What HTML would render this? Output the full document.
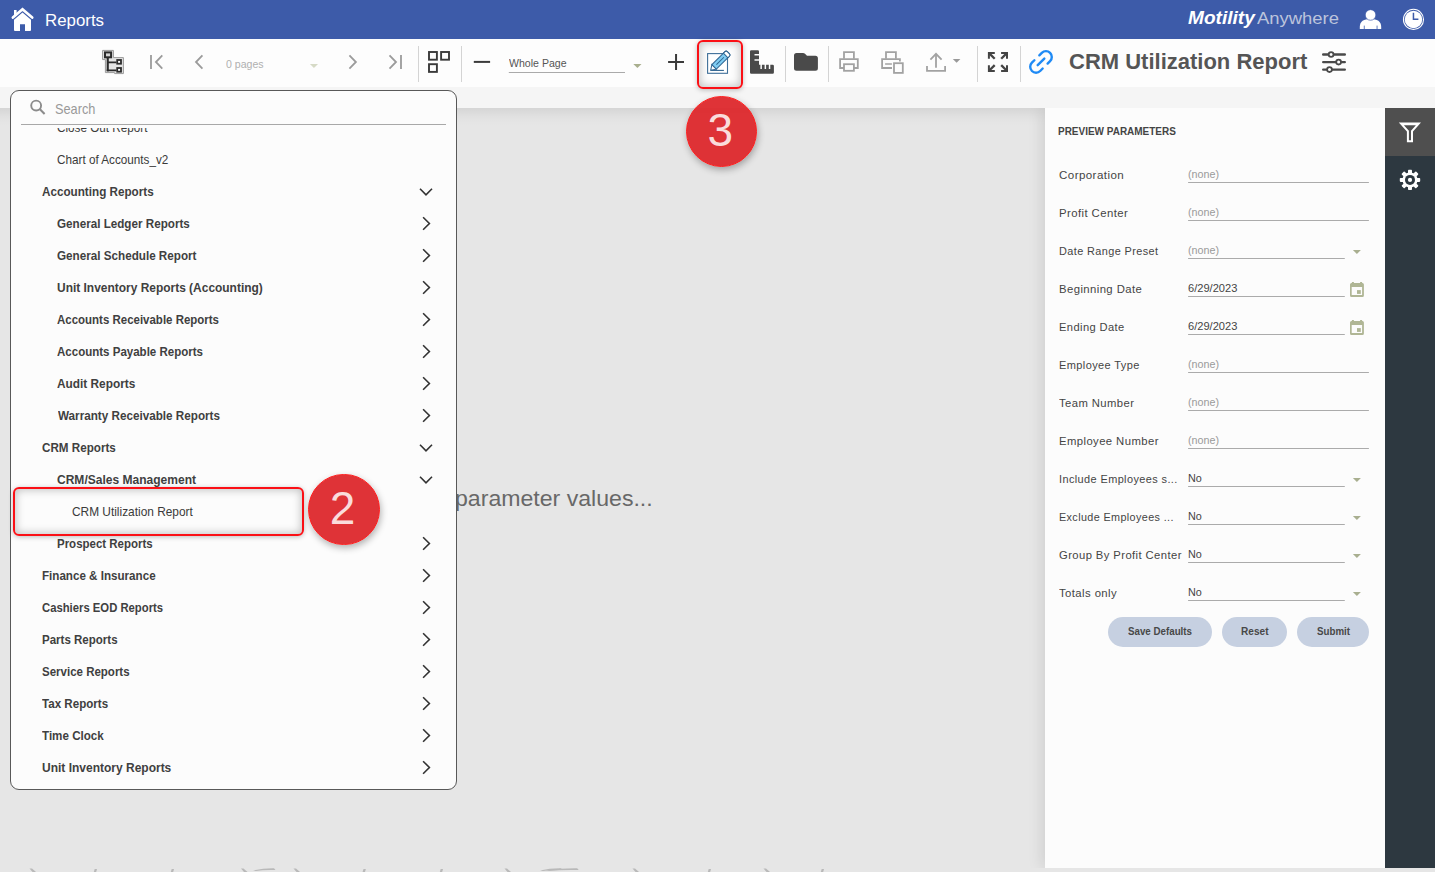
<!DOCTYPE html>
<html><head><meta charset="utf-8"><title>Reports</title>
<style>
*{box-sizing:border-box;margin:0;padding:0}
html,body{width:1435px;height:872px;overflow:hidden;background:#e6e6e6;font-family:"Liberation Sans",sans-serif;}
body{position:relative}
.abs{position:absolute}
#hdr{left:0;top:0;width:1435px;height:39px;background:#3d5ba9}
#tb{left:0;top:39px;width:1435px;height:48px;background:#fdfdfd}
#strip{left:0;top:87px;width:1435px;height:21px;background:#f5f5f5}
#main{left:0;top:108px;width:1435px;height:760px;background:#e6e6e6;overflow:hidden}
#mainsh{left:0;top:0;width:1045px;height:18px;background:linear-gradient(to bottom,rgba(0,0,0,0.075),rgba(0,0,0,0.05) 22%,rgba(0,0,0,0.025) 48%,rgba(0,0,0,0.008) 75%,rgba(0,0,0,0))}
#tree{left:10px;top:90px;width:447px;height:700px;background:#fcfcfc;border:1px solid #585858;border-radius:9px;overflow:hidden}
#rp{left:1045px;top:0;width:340px;height:760px;background:#fcfcfc;box-shadow:-3px 0 14px rgba(0,0,0,0.10)}
#sb{left:1385px;top:108px;width:50px;height:760px;background:#2d3840}
#sbtab{left:1385px;top:108px;width:50px;height:48px;background:#4f4f4f}
.ti{position:absolute;height:32px;line-height:32px;font-size:13px;color:#3a3a3a;white-space:nowrap}
.ti.b{font-weight:bold;color:#404040}
.tx{display:inline-block;transform-origin:0 50%;white-space:nowrap}
.chv{position:absolute}
.t{position:absolute;white-space:nowrap}
.lab{font-size:11px;line-height:16px;color:#444;letter-spacing:0.4px}
.val{font-size:11px;line-height:16px}
.btn{height:29.6px;border-radius:15px;background:#c6d0e1}
.btx{font-size:10px;line-height:14px;font-weight:bold;color:#484848}
.rbox{border:2px solid #fb1016;box-shadow:inset 0 0 8px 1px rgba(0,0,0,0.24),0 1px 5px rgba(0,0,0,0.25)}
.rcirc{width:71.6px;height:71.6px;border-radius:50%;background:rgba(221,40,44,0.95);border:1.6px solid #ff2020;box-shadow:1px 3px 7px rgba(0,0,0,0.3);color:#fadcdc;font-size:46px;line-height:66px;text-align:center;text-indent:-2.6px}
</style></head><body>
<div class="abs" id="hdr"></div>
<div class="abs" id="tb"></div>
<div class="abs" id="strip"></div>
<div class="abs" id="main"><div class="abs" id="mainsh"></div><div class="abs" id="rp"></div></div>
<div class="abs" id="sb"></div>
<div class="abs" id="sbtab"></div>
<svg class="abs" style="left:0;top:0" width="120" height="39" viewBox="0 0 120 39">
<path d="M12.9 17.6 L22.5 9.2 L32.2 17.6" fill="none" stroke="#fff" stroke-width="2.7" stroke-linecap="round" stroke-linejoin="miter"/>
<path d="M14 19.8 L22.5 12.4 L31 19.8 L31 30 Q31 31 30 31 L25 31 L25 24.3 L20 24.3 L20 31 L15 31 Q14 31 14 30 Z" fill="#fff"/>
<rect x="14" y="10" width="2.6" height="5.5" fill="#fff"/>
</svg>
<div class="t" style="left:44.6px;top:10px;font-size:16.2px;line-height:20px;color:#fff"><span style="display:inline-block;transform-origin:0 50%;transform:scaleX(1.0408)">Reports</span></div>
<div class="t" style="left:1188px;top:5.9px;font-size:18.5px;line-height:24px;color:#fff;font-weight:bold;font-style:italic"><span style="display:inline-block;transform-origin:0 50%;transform:scaleX(1.0317)">Motility</span></div>
<div class="t" style="left:1257px;top:7.4px;font-size:17px;line-height:24px;color:#bcc4dc"><span style="display:inline-block;transform-origin:0 50%;transform:scaleX(1.0845)">Anywhere</span></div>
<svg class="abs" style="left:1355px;top:5px" width="32" height="30" viewBox="0 0 32 30">
<path d="M4.8 24 L4.8 21.8 C4.8 16.4 8.8 14 15.5 14 C22.2 14 26.2 16.4 26.2 21.8 L26.2 24 Z" fill="#fff"/>
<circle cx="15.55" cy="9.95" r="5.3" fill="#fff" stroke="#3d5ba9" stroke-width="0.7"/>
<rect x="8.8" y="20.6" width="0.9" height="3.4" fill="#5571b6"/><rect x="21.6" y="20.6" width="0.9" height="3.4" fill="#5571b6"/>
</svg>
<svg class="abs" style="left:1400px;top:6px" width="28" height="28" viewBox="0 0 28 28">
<circle cx="13.5" cy="13.4" r="10.05" fill="none" stroke="#fff" stroke-width="1.05"/>
<circle cx="13.5" cy="13.4" r="8.75" fill="#fff"/>
<path d="M13.45 6.7 V13.35 H18.4" fill="none" stroke="#3d5ba9" stroke-width="1.5"/>
</svg>
<!-- toolbar icons -->
<svg class="abs" style="left:0;top:39px" width="1435" height="48" viewBox="0 39 1435 48">
<!-- tree icon -->
<g>
<path d="M102.6 50.4 H113.4 V57.6 H123.4 V73.6 H114.6 V72.6 H105.4 V59.6 H102.6 Z" fill="#e4e4e4" stroke="#9a9a9a" stroke-width="1"/>
<rect x="105" y="52.4" width="6.1" height="4.9" fill="#d4d4d4" stroke="#2b2b2b" stroke-width="2"/>
<path d="M107.75 58 V71.3" fill="none" stroke="#2b2b2b" stroke-width="2.1"/>
<path d="M106.7 70.45 H116.4 M107.7 62.45 H116.4" fill="none" stroke="#2b2b2b" stroke-width="1.7"/>
<rect x="117.2" y="60" width="3.8" height="3.7" fill="#fff" stroke="#2b2b2b" stroke-width="1.8"/>
<rect x="117.2" y="68" width="3.8" height="3.7" fill="#fff" stroke="#2b2b2b" stroke-width="1.8"/>
</g>
<!-- first / prev / next / last -->
<g fill="none" stroke="#9b9b9b" stroke-width="1.8">
<path d="M151 55 V69"/><path d="M162.3 55.4 L155.9 62 L162.3 68.6"/>
<path d="M202.4 55.4 L196 62 L202.4 68.6"/>
<path d="M349.4 55.4 L355.9 62 L349.4 68.6"/>
<path d="M389.5 55.4 L396 62 L389.5 68.6"/><path d="M401 55 V69"/>
</g>
<!-- dropdown arrows -->
<path d="M309.9 63.9 H318 L313.95 68 Z" fill="#d6dac6"/>
<path d="M633.3 63.9 H641.5 L637.4 68.1 Z" fill="#a9af8e"/>
<!-- separators -->
<g stroke="#d4d4d4" stroke-width="1">
<path d="M418.5 46 V82"/><path d="M461.5 46 V82"/><path d="M785.5 46 V82"/><path d="M828.5 46 V82"/><path d="M977.5 46 V82"/><path d="M1020.5 46 V82"/>
</g>
<!-- grid -->
<g fill="none" stroke="#3a3a3a" stroke-width="1.9">
<rect x="429" y="52" width="7.9" height="7.7"/><rect x="441.1" y="52" width="7.9" height="7.7"/><rect x="429" y="64.2" width="7.9" height="7.7"/>
</g>
<!-- minus / plus -->
<path d="M473.8 61.9 H490.1" stroke="#3a3a3a" stroke-width="2"/>
<path d="M668.1 62 H684 M676.05 54.1 V69.9" stroke="#3a3a3a" stroke-width="2" fill="none"/>
<!-- zoom underline -->
<path d="M508.8 72.5 H625" stroke="#aaa" stroke-width="1"/>
</svg>
<div class="t" style="left:226.1px;top:56px;font-size:11px;line-height:16px;color:#b0b0b0"><span style="display:inline-block;transform-origin:0 50%;transform:scaleX(0.9603)">0 pages</span></div>
<div class="t" style="left:509.4px;top:54.9px;font-size:11px;line-height:16px;color:#555"><span style="display:inline-block;transform-origin:0 50%;transform:scaleX(0.9610)">Whole Page</span></div>
<svg class="abs" style="left:690px;top:39px" width="745" height="48" viewBox="690 39 745 48">
<!-- edit icon -->
<g>
<rect x="707.6" y="53.6" width="19.9" height="19.7" fill="#fff" stroke="#3f6f99" stroke-width="1.1"/>
<path d="M710.6 70.4 H723.9" stroke="#2f6490" stroke-width="1.1"/>
<g transform="translate(710.7 70.2) rotate(-44.5)">
<path d="M0 0 L4.8 -3.2 L4.8 3.2 Z" fill="#fff" stroke="#2f6490" stroke-width="1"/>
<path d="M4.8 -3.2 H23.2 Q24.8 -3.2 24.8 -1.6 V1.6 Q24.8 3.2 23.2 3.2 H4.8 Z" fill="#7fccf2" stroke="#2f6490" stroke-width="1"/>
<path d="M21 -3.2 H23.2 Q24.8 -3.2 24.8 -1.6 V1.6 Q24.8 3.2 23.2 3.2 H21 Z" fill="#fff" stroke="#2f6490" stroke-width="1"/>
<path d="M8 0 H18.5" stroke="#2f6490" stroke-width="1"/>
</g>
</g>
<!-- ruler -->
<path d="M751.2 50.2 H757.8 Q759 50.2 759 51.4 V54 H754.5 V55.5 H759 V59.3 H754.5 V60.8 H759 V64.8 H760.4 V69 H761.9 V64.8 H764.6 V69 H766.1 V64.8 H768.8 V69 H770.3 V64.8 H772.7 Q773.9 64.8 773.9 66 V72.6 Q773.9 73.8 772.7 73.8 H751.2 Q750 73.8 750 72.6 V51.4 Q750 50.2 751.2 50.2 Z" fill="#4a4a4a"/>
<!-- folder -->
<path d="M796.5 52.9 H803 Q804.2 52.9 805 53.7 L807 55.8 H815.4 Q817.9 55.8 817.9 58.3 V68.3 Q817.9 70.8 815.4 70.8 H796.5 Q794 70.8 794 68.3 V55.4 Q794 52.9 796.5 52.9 Z" fill="#4a4a4a"/>
<!-- printer -->
<g fill="none" stroke="#a2a2a2" stroke-width="1.8">
<path d="M844 58.8 V52.1 H853.9 V58.8"/>
<path d="M844 68 H840.1 V59.2 H857.8 V68 H853.9"/>
<rect x="844" y="64.2" width="9.9" height="6.6"/>
</g>
<!-- print page -->
<g fill="none" stroke="#a2a2a2" stroke-width="1.8">
<path d="M886 58.8 V52.1 H895.9 V58.8"/>
<path d="M892 68 H882.1 V59.2 H899.9 V61.4"/>
<path d="M885.1 64 H891.9" stroke-width="1.5"/>
<rect x="894" y="63.2" width="8.8" height="9.7"/>
</g>
<!-- export -->
<g fill="none" stroke="#a2a2a2" stroke-width="1.8">
<path d="M936 67.8 V54.3"/><path d="M930.4 59.6 L936 53.9 L941.6 59.6"/>
<path d="M927 66.1 V70.8 H945.1 V66.1"/>
</g>
<path d="M952.8 59 H960.4 L956.6 62.8 Z" fill="#999"/>
<!-- fullscreen -->
<g fill="none" stroke="#444" stroke-width="2">
<path d="M988.9 58.7 V53 H994.8"/><path d="M989.3 53.4 L994.7 58.8" stroke-width="2.3"/>
<path d="M1007 58.7 V53 H1001.1"/><path d="M1006.6 53.4 L1001.2 58.8" stroke-width="2.3"/>
<path d="M988.9 65.2 V70.9 H994.8"/><path d="M989.3 70.5 L994.7 65.1" stroke-width="2.3"/>
<path d="M1007 65.2 V70.9 H1001.1"/><path d="M1006.6 70.5 L1001.2 65.1" stroke-width="2.3"/>
</g>
<!-- link -->
<g fill="none" stroke="#1f8af5" stroke-width="2.4" stroke-linecap="round" transform="translate(1041 61.9) rotate(-45)">
<path d="M-3.5 -5.85 H-7 A5.85 5.85 0 0 0 -7 5.85 H-3.5"/>
<path d="M3.5 -5.85 H7 A5.85 5.85 0 0 1 7 5.85 H3.5"/>
<path d="M-4.7 0 H4.7"/>
</g>
<!-- sliders -->
<g fill="none" stroke="#4a4a4a" stroke-width="2.4" stroke-linecap="round">
<path d="M1323.2 54.5 H1344.8"/><path d="M1323.2 62.1 H1344.8"/><path d="M1323.2 69.6 H1344.8"/>
</g>
<g fill="#fff" stroke="#4a4a4a" stroke-width="1.8">
<circle cx="1331.1" cy="54.5" r="2.4"/><circle cx="1338.6" cy="62.1" r="2.4"/><circle cx="1329.5" cy="69.6" r="2.4"/>
</g>
</svg>
<div class="t" style="left:1068.6px;top:48px;font-size:21.2px;line-height:28px;color:#555;font-weight:bold"><span style="display:inline-block;transform-origin:0 50%;transform:scaleX(1.0383)">CRM Utilization Report</span></div>
<div class="t" style="left:454.8px;top:485.4px;font-size:22px;line-height:28px;color:#686868"><span style="display:inline-block;transform-origin:0 50%;transform:scaleX(1.0499)">parameter values...</span></div>
<div class="t" style="right:986px;top:485.4px;font-size:22px;line-height:28px;color:#686868">Waiting for</div>
<div class="abs" id="tree">
<svg class="abs" style="left:0;top:0" width="445" height="40" viewBox="11 91 445 40">
<circle cx="36.15" cy="105.55" r="4.95" fill="none" stroke="#8c8c8c" stroke-width="1.9"/>
<path d="M39.7 109.1 L44.6 114" stroke="#8c8c8c" stroke-width="2.1" stroke-linecap="butt"/>
<path d="M21 124.5 H446" stroke="#a8a8a8" stroke-width="1"/>
</svg>
<div class="t" style="left:44.4px;top:9.2px;font-size:14.2px;line-height:18px;color:#999"><span style="display:inline-block;transform-origin:0 50%;transform:scaleX(0.8987)">Search</span></div>
<div class="abs" style="left:0;top:36.9px;width:445px;height:20px;overflow:hidden"><div class="ti" style="left:46px;top:-15.6px"><span class="tx" style="display:inline-block;transform-origin:0 50%;transform:scaleX(0.9001)">Close Out Report</span></div></div>
<div class="ti" style="left:46.0px;top:52.5px"><span class="tx" style="display:inline-block;transform-origin:0 50%;transform:scaleX(0.9006)">Chart of Accounts_v2</span></div>
<div class="ti b" style="left:31.2px;top:84.5px"><span class="tx" style="display:inline-block;transform-origin:0 50%;transform:scaleX(0.8991)">Accounting Reports</span></div>
<svg class="chv" style="left:407px;top:92.5px" width="16" height="16" viewBox="0 0 16 16"><path d="M2 4.7 L8 10.8 L14 4.7" fill="none" stroke="#333" stroke-width="1.6"/></svg>
<div class="ti b" style="left:46.0px;top:116.5px"><span class="tx" style="display:inline-block;transform-origin:0 50%;transform:scaleX(0.8966)">General Ledger Reports</span></div>
<svg class="chv" style="left:407px;top:124.5px" width="16" height="16" viewBox="0 0 16 16"><path d="M5.1 1.2 L11.4 7.5 L5.1 13.8" fill="none" stroke="#333" stroke-width="1.6"/></svg>
<div class="ti b" style="left:46.0px;top:148.5px"><span class="tx" style="display:inline-block;transform-origin:0 50%;transform:scaleX(0.8981)">General Schedule Report</span></div>
<svg class="chv" style="left:407px;top:156.5px" width="16" height="16" viewBox="0 0 16 16"><path d="M5.1 1.2 L11.4 7.5 L5.1 13.8" fill="none" stroke="#333" stroke-width="1.6"/></svg>
<div class="ti b" style="left:46.0px;top:180.5px"><span class="tx" style="display:inline-block;transform-origin:0 50%;transform:scaleX(0.9192)">Unit Inventory Reports (Accounting)</span></div>
<svg class="chv" style="left:407px;top:188.5px" width="16" height="16" viewBox="0 0 16 16"><path d="M5.1 1.2 L11.4 7.5 L5.1 13.8" fill="none" stroke="#333" stroke-width="1.6"/></svg>
<div class="ti b" style="left:46.0px;top:212.5px"><span class="tx" style="display:inline-block;transform-origin:0 50%;transform:scaleX(0.8828)">Accounts Receivable Reports</span></div>
<svg class="chv" style="left:407px;top:220.5px" width="16" height="16" viewBox="0 0 16 16"><path d="M5.1 1.2 L11.4 7.5 L5.1 13.8" fill="none" stroke="#333" stroke-width="1.6"/></svg>
<div class="ti b" style="left:46.0px;top:244.5px"><span class="tx" style="display:inline-block;transform-origin:0 50%;transform:scaleX(0.8864)">Accounts Payable Reports</span></div>
<svg class="chv" style="left:407px;top:252.5px" width="16" height="16" viewBox="0 0 16 16"><path d="M5.1 1.2 L11.4 7.5 L5.1 13.8" fill="none" stroke="#333" stroke-width="1.6"/></svg>
<div class="ti b" style="left:46.0px;top:276.5px"><span class="tx" style="display:inline-block;transform-origin:0 50%;transform:scaleX(0.9110)">Audit Reports</span></div>
<svg class="chv" style="left:407px;top:284.5px" width="16" height="16" viewBox="0 0 16 16"><path d="M5.1 1.2 L11.4 7.5 L5.1 13.8" fill="none" stroke="#333" stroke-width="1.6"/></svg>
<div class="ti b" style="left:46.5px;top:308.5px"><span class="tx" style="display:inline-block;transform-origin:0 50%;transform:scaleX(0.8993)">Warranty Receivable Reports</span></div>
<svg class="chv" style="left:407px;top:316.5px" width="16" height="16" viewBox="0 0 16 16"><path d="M5.1 1.2 L11.4 7.5 L5.1 13.8" fill="none" stroke="#333" stroke-width="1.6"/></svg>
<div class="ti b" style="left:31.2px;top:340.5px"><span class="tx" style="display:inline-block;transform-origin:0 50%;transform:scaleX(0.8962)">CRM Reports</span></div>
<svg class="chv" style="left:407px;top:348.5px" width="16" height="16" viewBox="0 0 16 16"><path d="M2 4.7 L8 10.8 L14 4.7" fill="none" stroke="#333" stroke-width="1.6"/></svg>
<div class="ti b" style="left:46.0px;top:372.5px"><span class="tx" style="display:inline-block;transform-origin:0 50%;transform:scaleX(0.9250)">CRM/Sales Management</span></div>
<svg class="chv" style="left:407px;top:380.5px" width="16" height="16" viewBox="0 0 16 16"><path d="M2 4.7 L8 10.8 L14 4.7" fill="none" stroke="#333" stroke-width="1.6"/></svg>
<div class="ti" style="left:61.0px;top:404.5px"><span class="tx" style="display:inline-block;transform-origin:0 50%;transform:scaleX(0.9137)">CRM Utilization Report</span></div>
<div class="ti b" style="left:45.8px;top:436.5px"><span class="tx" style="display:inline-block;transform-origin:0 50%;transform:scaleX(0.8830)">Prospect Reports</span></div>
<svg class="chv" style="left:407px;top:444.5px" width="16" height="16" viewBox="0 0 16 16"><path d="M5.1 1.2 L11.4 7.5 L5.1 13.8" fill="none" stroke="#333" stroke-width="1.6"/></svg>
<div class="ti b" style="left:31.4px;top:468.5px"><span class="tx" style="display:inline-block;transform-origin:0 50%;transform:scaleX(0.8934)">Finance &amp; Insurance</span></div>
<svg class="chv" style="left:407px;top:476.5px" width="16" height="16" viewBox="0 0 16 16"><path d="M5.1 1.2 L11.4 7.5 L5.1 13.8" fill="none" stroke="#333" stroke-width="1.6"/></svg>
<div class="ti b" style="left:31.2px;top:500.5px"><span class="tx" style="display:inline-block;transform-origin:0 50%;transform:scaleX(0.8685)">Cashiers EOD Reports</span></div>
<svg class="chv" style="left:407px;top:508.5px" width="16" height="16" viewBox="0 0 16 16"><path d="M5.1 1.2 L11.4 7.5 L5.1 13.8" fill="none" stroke="#333" stroke-width="1.6"/></svg>
<div class="ti b" style="left:31.4px;top:532.5px"><span class="tx" style="display:inline-block;transform-origin:0 50%;transform:scaleX(0.8868)">Parts Reports</span></div>
<svg class="chv" style="left:407px;top:540.5px" width="16" height="16" viewBox="0 0 16 16"><path d="M5.1 1.2 L11.4 7.5 L5.1 13.8" fill="none" stroke="#333" stroke-width="1.6"/></svg>
<div class="ti b" style="left:31.2px;top:564.5px"><span class="tx" style="display:inline-block;transform-origin:0 50%;transform:scaleX(0.8848)">Service Reports</span></div>
<svg class="chv" style="left:407px;top:572.5px" width="16" height="16" viewBox="0 0 16 16"><path d="M5.1 1.2 L11.4 7.5 L5.1 13.8" fill="none" stroke="#333" stroke-width="1.6"/></svg>
<div class="ti b" style="left:31.2px;top:596.5px"><span class="tx" style="display:inline-block;transform-origin:0 50%;transform:scaleX(0.8912)">Tax Reports</span></div>
<svg class="chv" style="left:407px;top:604.5px" width="16" height="16" viewBox="0 0 16 16"><path d="M5.1 1.2 L11.4 7.5 L5.1 13.8" fill="none" stroke="#333" stroke-width="1.6"/></svg>
<div class="ti b" style="left:31.2px;top:628.5px"><span class="tx" style="display:inline-block;transform-origin:0 50%;transform:scaleX(0.8940)">Time Clock</span></div>
<svg class="chv" style="left:407px;top:636.5px" width="16" height="16" viewBox="0 0 16 16"><path d="M5.1 1.2 L11.4 7.5 L5.1 13.8" fill="none" stroke="#333" stroke-width="1.6"/></svg>
<div class="ti b" style="left:31.2px;top:660.5px"><span class="tx" style="display:inline-block;transform-origin:0 50%;transform:scaleX(0.9227)">Unit Inventory Reports</span></div>
<svg class="chv" style="left:407px;top:668.5px" width="16" height="16" viewBox="0 0 16 16"><path d="M5.1 1.2 L11.4 7.5 L5.1 13.8" fill="none" stroke="#333" stroke-width="1.6"/></svg></div>
<!-- right panel -->
<div class="t" style="left:1058.1px;top:124.6px;font-size:10px;line-height:14px;font-weight:bold;color:#444"><span style="display:inline-block;transform-origin:0 50%;transform:scaleX(0.9977)">PREVIEW PARAMETERS</span></div>
<div class="t lab" style="left:1059.3px;top:166.6px"><span style="display:inline-block;transform-origin:0 50%;transform:scaleX(1.0519)">Corporation</span></div>
<div class="t val" style="left:1188.2px;top:166.4px;color:#9a9a9a"><span style="display:inline-block;transform-origin:0 50%;transform:scaleX(0.9749)">(none)</span></div>
<div class="t lab" style="left:1059.3px;top:204.6px"><span style="display:inline-block;transform-origin:0 50%;transform:scaleX(1.0336)">Profit Center</span></div>
<div class="t val" style="left:1188.2px;top:204.4px;color:#9a9a9a"><span style="display:inline-block;transform-origin:0 50%;transform:scaleX(0.9749)">(none)</span></div>
<div class="t lab" style="left:1059.3px;top:242.6px"><span style="display:inline-block;transform-origin:0 50%;transform:scaleX(0.9904)">Date Range Preset</span></div>
<div class="t val" style="left:1188.2px;top:242.4px;color:#9a9a9a"><span style="display:inline-block;transform-origin:0 50%;transform:scaleX(0.9749)">(none)</span></div>
<div class="t lab" style="left:1059.3px;top:280.6px"><span style="display:inline-block;transform-origin:0 50%;transform:scaleX(1.0293)">Beginning Date</span></div>
<div class="t val" style="left:1188.2px;top:280.4px;color:#444"><span style="display:inline-block;transform-origin:0 50%;transform:scaleX(1.0074)">6/29/2023</span></div>
<div class="t lab" style="left:1059.3px;top:318.6px"><span style="display:inline-block;transform-origin:0 50%;transform:scaleX(1.0115)">Ending Date</span></div>
<div class="t val" style="left:1188.2px;top:318.4px;color:#444"><span style="display:inline-block;transform-origin:0 50%;transform:scaleX(1.0074)">6/29/2023</span></div>
<div class="t lab" style="left:1059.3px;top:356.6px"><span style="display:inline-block;transform-origin:0 50%;transform:scaleX(0.9997)">Employee Type</span></div>
<div class="t val" style="left:1188.2px;top:356.4px;color:#9a9a9a"><span style="display:inline-block;transform-origin:0 50%;transform:scaleX(0.9749)">(none)</span></div>
<div class="t lab" style="left:1059.3px;top:394.6px"><span style="display:inline-block;transform-origin:0 50%;transform:scaleX(1.0247)">Team Number</span></div>
<div class="t val" style="left:1188.2px;top:394.4px;color:#9a9a9a"><span style="display:inline-block;transform-origin:0 50%;transform:scaleX(0.9749)">(none)</span></div>
<div class="t lab" style="left:1059.3px;top:432.6px"><span style="display:inline-block;transform-origin:0 50%;transform:scaleX(1.0279)">Employee Number</span></div>
<div class="t val" style="left:1188.2px;top:432.4px;color:#9a9a9a"><span style="display:inline-block;transform-origin:0 50%;transform:scaleX(0.9749)">(none)</span></div>
<div class="t lab" style="left:1059.3px;top:470.6px"><span style="display:inline-block;transform-origin:0 50%;transform:scaleX(0.9936)">Include Employees s...</span></div>
<div class="t val" style="left:1188.2px;top:470.4px;color:#444"><span style="display:inline-block;transform-origin:0 50%;transform:scaleX(0.9813)">No</span></div>
<div class="t lab" style="left:1059.3px;top:508.6px"><span style="display:inline-block;transform-origin:0 50%;transform:scaleX(0.9801)">Exclude Employees ...</span></div>
<div class="t val" style="left:1188.2px;top:508.4px;color:#444"><span style="display:inline-block;transform-origin:0 50%;transform:scaleX(0.9813)">No</span></div>
<div class="t lab" style="left:1059.3px;top:546.6px"><span style="display:inline-block;transform-origin:0 50%;transform:scaleX(1.0227)">Group By Profit Center</span></div>
<div class="t val" style="left:1188.2px;top:546.4px;color:#444"><span style="display:inline-block;transform-origin:0 50%;transform:scaleX(0.9813)">No</span></div>
<div class="t lab" style="left:1059.3px;top:584.6px"><span style="display:inline-block;transform-origin:0 50%;transform:scaleX(1.0306)">Totals only</span></div>
<div class="t val" style="left:1188.2px;top:584.4px;color:#444"><span style="display:inline-block;transform-origin:0 50%;transform:scaleX(0.9813)">No</span></div>
<svg class="abs" style="left:1045px;top:107px" width="340" height="760" viewBox="1045 107 340 760">
<path d="M1188.1 182.5 H1368.9" stroke="#ababab" stroke-width="1"/>
<path d="M1188.1 220.5 H1368.9" stroke="#ababab" stroke-width="1"/>
<path d="M1188.1 258.5 H1344.8" stroke="#ababab" stroke-width="1"/>
<path d="M1352.9 249.9 H1360.9 L1356.9 254.1 Z" fill="#a9af90"/>
<path d="M1188.1 296.5 H1344.8" stroke="#ababab" stroke-width="1"/>
<g><path fill-rule="evenodd" d="M1351.5 283.1 H1362.4 Q1363.9 283.1 1363.9 284.6 V295.4 Q1363.9 296.9 1362.4 296.9 H1351.5 Q1350 296.9 1350 295.4 V284.6 Q1350 283.1 1351.5 283.1 Z M1351.7 286.9 H1362.1 V295.1 H1351.7 Z" fill="#b0b695"/><rect x="1351.9" y="282.0" width="2" height="1.5" fill="#b0b695"/><rect x="1360.1" y="282.0" width="2" height="1.5" fill="#b0b695"/><rect x="1357" y="290.1" width="3.8" height="3.8" fill="#b0b695"/></g>
<path d="M1188.1 334.5 H1344.8" stroke="#ababab" stroke-width="1"/>
<g><path fill-rule="evenodd" d="M1351.5 321.1 H1362.4 Q1363.9 321.1 1363.9 322.6 V333.4 Q1363.9 334.9 1362.4 334.9 H1351.5 Q1350 334.9 1350 333.4 V322.6 Q1350 321.1 1351.5 321.1 Z M1351.7 324.9 H1362.1 V333.1 H1351.7 Z" fill="#b0b695"/><rect x="1351.9" y="320.0" width="2" height="1.5" fill="#b0b695"/><rect x="1360.1" y="320.0" width="2" height="1.5" fill="#b0b695"/><rect x="1357" y="328.1" width="3.8" height="3.8" fill="#b0b695"/></g>
<path d="M1188.1 372.5 H1368.9" stroke="#ababab" stroke-width="1"/>
<path d="M1188.1 410.5 H1368.9" stroke="#ababab" stroke-width="1"/>
<path d="M1188.1 448.5 H1368.9" stroke="#ababab" stroke-width="1"/>
<path d="M1188.1 486.5 H1344.8" stroke="#ababab" stroke-width="1"/>
<path d="M1352.9 477.9 H1360.9 L1356.9 482.1 Z" fill="#a9af90"/>
<path d="M1188.1 524.5 H1344.8" stroke="#ababab" stroke-width="1"/>
<path d="M1352.9 515.9 H1360.9 L1356.9 520.1 Z" fill="#a9af90"/>
<path d="M1188.1 562.5 H1344.8" stroke="#ababab" stroke-width="1"/>
<path d="M1352.9 553.9 H1360.9 L1356.9 558.1 Z" fill="#a9af90"/>
<path d="M1188.1 600.5 H1344.8" stroke="#ababab" stroke-width="1"/>
<path d="M1352.9 591.9 H1360.9 L1356.9 596.1 Z" fill="#a9af90"/>
</svg>
<div class="abs btn" style="left:1107.8px;top:617.1px;width:103.9px"></div>
<div class="t btx" style="left:1128.4px;top:625.3px"><span style="display:inline-block;transform-origin:0 50%;transform:scaleX(0.9757)">Save Defaults</span></div>
<div class="abs btn" style="left:1222px;top:617.1px;width:64.7px"></div>
<div class="t btx" style="left:1241px;top:625.3px"><span style="display:inline-block;transform-origin:0 50%;transform:scaleX(1.0092)">Reset</span></div>
<div class="abs btn" style="left:1297px;top:617.1px;width:72.0px"></div>
<div class="t btx" style="left:1317.4px;top:625.3px"><span style="display:inline-block;transform-origin:0 50%;transform:scaleX(0.9737)">Submit</span></div>
<svg class="abs" style="left:1385px;top:107px" width="50" height="100" viewBox="1385 107 50 100">
<path fill-rule="evenodd" d="M1398.8 122.6 H1421 L1413 131.5 V142.3 H1406.9 V131.5 Z M1403.9 125.2 H1415.9 L1411 130.7 V140.3 H1408.9 V130.7 Z" fill="#fff"/>
<g transform="translate(1410 179.9)">
<g fill="#fff">
<rect x="-2" y="-10.2" width="4" height="20.4" rx="0.8"/>
<rect x="-2" y="-10.2" width="4" height="20.4" rx="0.8" transform="rotate(45)"/>
<rect x="-2" y="-10.2" width="4" height="20.4" rx="0.8" transform="rotate(90)"/>
<rect x="-2" y="-10.2" width="4" height="20.4" rx="0.8" transform="rotate(135)"/>
<circle r="7.5"/>
</g>
<circle r="5" fill="#2d3840"/>
<circle r="2.1" fill="#fff"/>
</g>
</svg>
<!-- annotation overlays -->
<div class="abs rbox" style="left:696.7px;top:40.3px;width:46.8px;height:49.2px;border-radius:6px"></div>
<div class="abs rbox" style="left:12.5px;top:487.3px;width:291.6px;height:48.5px;border-radius:6px"></div>
<div class="abs rcirc" style="left:685.8px;top:95.8px">3</div>
<div class="abs rcirc" style="left:308px;top:473.9px">2</div>
<svg class="abs" style="left:0;top:866px" width="900" height="6" viewBox="0 866 900 6"><g fill="#b9b9b9" stroke="none"><path d="M29.5 868.6 L32 868.6 L36 872 L32.5 872 Z"/><path d="M241.0 868.6 L243.5 868.6 L247.5 872 L244.0 872 Z"/><path d="M293.5 868.6 L296 868.6 L300 872 L296.5 872 Z"/><path d="M504.5 868.6 L507 868.6 L511 872 L507.5 872 Z"/><path d="M632.5 868.6 L635 868.6 L639 872 L635.5 872 Z"/><path d="M763.5 868.6 L766 868.6 L770 872 L766.5 872 Z"/><path d="M94.7 869 L97 869 L96.2 872 L93.8 872 Z"/><path d="M171.7 869 L174 869 L173.2 872 L170.8 872 Z"/><path d="M363.5 869 L365.8 869 L365.0 872 L362.6 872 Z"/><path d="M440.7 869 L443 869 L442.2 872 L439.8 872 Z"/><path d="M708.7 869 L711 869 L710.2 872 L707.8 872 Z"/><path d="M821.7 869 L824 869 L823.2 872 L820.8 872 Z"/><path d="M253.0 870.6 Q263.5 868 274.0 868.2 L275.5 870 Q263.5 869.6 256.0 871 Z"/><path d="M540.0 870.6 Q550.5 868 561.0 868.2 L562.5 870 Q550.5 869.6 543.0 871 Z"/><path d="M545.8 870.6 Q561.5 868 577.2 868.2 L578.7 870 Q561.5 869.6 548.8 871 Z"/></g></svg>
</body></html>
